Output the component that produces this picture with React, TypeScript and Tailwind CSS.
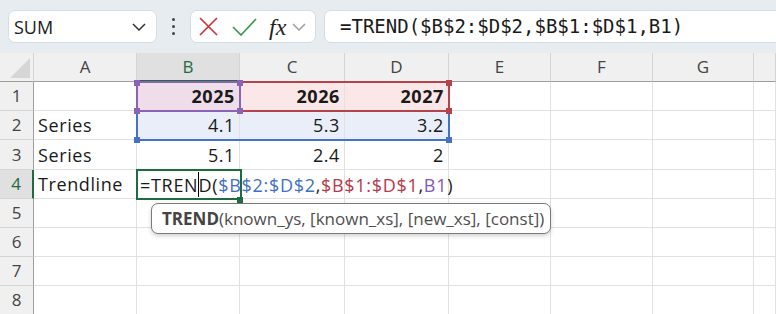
import React from "react";

const cols = ["A", "B", "C", "D", "E", "F", "G", ""];
const rows = [1, 2, 3, 4, 5, 6, 7, 8];

type CellVal = { t: string; bold?: boolean; right?: boolean; bg?: string };

const data: Record<string, CellVal> = {
  "1-1": { t: "2025", bold: true, right: true, bg: "bg-[#efdeea]" },
  "1-2": { t: "2026", bold: true, right: true, bg: "bg-[#fbe7e7]" },
  "1-3": { t: "2027", bold: true, right: true, bg: "bg-[#fbe7e7]" },
  "2-0": { t: "Series" },
  "2-1": { t: "4.1", right: true, bg: "bg-[#e9eef8]" },
  "2-2": { t: "5.3", right: true, bg: "bg-[#e9eef8]" },
  "2-3": { t: "3.2", right: true, bg: "bg-[#e9eef8]" },
  "3-0": { t: "Series" },
  "3-1": { t: "5.1", right: true },
  "3-2": { t: "2.4", right: true },
  "3-3": { t: "2", right: true },
  "4-0": { t: "Trendline" },
};

function Handle({ x, y, color }: { x: number; y: number; color: string }) {
  return (
    <div
      className={`absolute w-[6px] h-[6px] ${color}`}
      style={{ left: x - 3, top: y - 3 }}
    />
  );
}

export default function App() {
  return (
    <div
      className="w-[776px] h-[314px] overflow-hidden bg-white text-[#1a1a1a]"
      style={{ fontFamily: '"Open Sans", "Noto Sans", sans-serif' }}
    >
      {/* Top bar */}
      <div className="h-[53px] bg-[#e6ecf0] flex items-start pt-[10px] pl-[8px]">
        <div className="w-[149px] h-[33px] bg-white rounded-[7px] border border-[#d6dde2] flex items-center justify-between pl-[5px] pr-[10px]">
          <span className="text-[18px] leading-none">SUM</span>
          <svg width="14" height="8" viewBox="0 0 14 8" fill="none" className="mt-[1px]">
            <path d="M1 1l6 6 6-6" stroke="#333" strokeWidth="1.5" />
          </svg>
        </div>
        <div className="w-[33px] h-[33px] flex flex-col items-center justify-center gap-[4px]">
          <div className="w-[3px] h-[3px] rounded-full bg-[#444]" />
          <div className="w-[3px] h-[3px] rounded-full bg-[#444]" />
          <div className="w-[3px] h-[3px] rounded-full bg-[#444]" />
        </div>
        <div className="w-[126px] h-[33px] bg-white rounded-[7px] border border-[#d6dde2] flex items-center pl-[8px]">
          <svg width="19" height="19" viewBox="0 0 19 19" fill="none">
            <path d="M1 1l17 17M18 1L1 18" stroke="#d13438" strokeWidth="1.7" />
          </svg>
          <svg width="25" height="18" viewBox="0 0 25 18" fill="none" className="ml-[14px]">
            <path d="M1 9l8 8L24 1" stroke="#3a9a54" strokeWidth="1.7" />
          </svg>
          <span
            className="ml-[12px] text-[24px] italic leading-none text-[#222]"
            style={{ fontFamily: '"Liberation Serif", "DejaVu Serif", serif' }}
          >
            fx
          </span>
          <svg width="14" height="8" viewBox="0 0 14 8" fill="none" className="ml-[6px]">
            <path d="M1 1l6 6 6-6" stroke="#9aa0a4" strokeWidth="1.5" />
          </svg>
        </div>
        <div className="flex-1 ml-[8px] mr-[-12px] h-[33px] bg-white rounded-[7px] border border-[#d6dde2] flex items-center pl-[15px]">
          <span
            className="text-[19px] leading-none text-[#1a1a1a]"
            style={{ fontFamily: '"DejaVu Sans Mono", "Liberation Mono", monospace' }}
          >
            =TREND($B$2:$D$2,$B$1:$D$1,B1)
          </span>
        </div>
      </div>

      {/* Grid */}
      <div className="relative">
        <div className="grid grid-cols-[34px_103px_103px_105px_104px_102px_102px_101px_1fr] grid-rows-[29px_29px_29px_30px_29px_29px_29px_29px_29px]">
          {/* corner */}
          <div className="relative bg-[#f0f0f0] border-b border-[#9e9e9e] border-r border-r-[#d4d4d4]">
            <svg className="absolute right-[3px] bottom-[3px]" width="20" height="20" viewBox="0 0 20 20">
              <path d="M20 0L20 20L0 20Z" fill="#d6d6d6" />
            </svg>
          </div>
          {cols.map((c, i) => (
            <div
              key={c + i}
              className={
                i === 1
                  ? "bg-[#e0e0e0] border-r border-[#d4d4d4] border-b-2 border-b-[#1e6b3f] text-[#1e6b3f] text-[17px] flex items-center justify-center"
                  : "bg-[#f0f0f0] border-r border-[#d4d4d4] border-b border-b-[#9e9e9e] text-[#444] text-[17px] flex items-center justify-center"
              }
            >
              {c}
            </div>
          ))}
          {rows.map((r) => (
            <React.Fragment key={r}>
              <div
                className={
                  r === 4
                    ? "bg-[#e0e0e0] border-b border-[#d4d4d4] border-r-2 border-r-[#1e6b3f] text-[#1e6b3f] text-[17px] flex items-center justify-center"
                    : "bg-[#f0f0f0] border-b border-[#d4d4d4] border-r border-r-[#9e9e9e] text-[#444] text-[17px] flex items-center justify-center"
                }
              >
                {r}
              </div>
              {cols.map((_, ci) => {
                const v = data[`${r}-${ci}`];
                return (
                  <div
                    key={ci}
                    className={`border-r border-b border-[#e1e1e1] flex items-center px-[4px] text-[18px] leading-none tracking-[0.6px] whitespace-nowrap ${
                      v?.bg ?? ""
                    } ${v?.right ? "justify-end" : "justify-start"} ${v?.bold ? "font-bold" : ""}`}
                  >
                    {v?.t}
                  </div>
                );
              })}
            </React.Fragment>
          ))}
        </div>

        {/* blue range B2:D2 */}
        <div className="absolute left-[136px] top-[57px] w-[314px] h-[31px] border-2 border-[#4472c4]" />
        <Handle x={137} y={87} color="bg-[#4472c4]" />
        <Handle x={449} y={87} color="bg-[#4472c4]" />
        {/* red range B1:D1 */}
        <div className="absolute left-[136px] top-[28px] w-[314px] h-[31px] border-2 border-[#b5434c]" />
        <Handle x={449} y={30} color="bg-[#b5434c]" />
        <Handle x={449} y={58} color="bg-[#b5434c]" />
        {/* purple B1 */}
        <div className="absolute left-[136px] top-[28px] w-[105px] h-[31px] border-2 border-[#8a64b2]" />
        <Handle x={137} y={30} color="bg-[#8a64b2]" />
        <Handle x={240} y={30} color="bg-[#8a64b2]" />
        <Handle x={137} y={58} color="bg-[#8a64b2]" />
        <Handle x={240} y={58} color="bg-[#8a64b2]" />

        {/* active cell B4 */}
        <div className="absolute left-[136px] top-[116px] w-[106px] h-[31px] border-2 border-[#1e6b3f] bg-white" />
        <div className="absolute left-[237px] top-[144px] w-[6px] h-[6px] bg-[#1e6b3f]" />
        <div className="absolute left-[140px] top-[117px] h-[29px] flex items-center text-[18px] leading-none tracking-[0.7px] whitespace-nowrap">
          <span className="relative">
            =TREN
            <span className="absolute right-[-1px] top-[-4px] w-[1px] h-[25px] bg-black" />
          </span>
          <span>D(</span>
          <span className="text-[#3f6fc4]">$B$2:$D$2</span>
          <span>,</span>
          <span className="text-[#b5394a]">$B$1:$D$1</span>
          <span>,</span>
          <span className="text-[#8558b0]">B1</span>
          <span>)</span>
        </div>

        {/* tooltip */}
        <div className="absolute left-[151px] top-[150px] w-[400px] h-[31px] rounded-[7px] border border-[#7a7a7a] bg-white shadow-[0_2px_4px_rgba(0,0,0,0.18)] flex items-center pl-[10px] text-[17px] leading-none text-[#505050] whitespace-nowrap">
          <span className="font-bold text-[#444]">TREND</span>
          <span>(known_ys, [known_xs], [new_xs], [const])</span>
        </div>
      </div>
    </div>
  );
}
